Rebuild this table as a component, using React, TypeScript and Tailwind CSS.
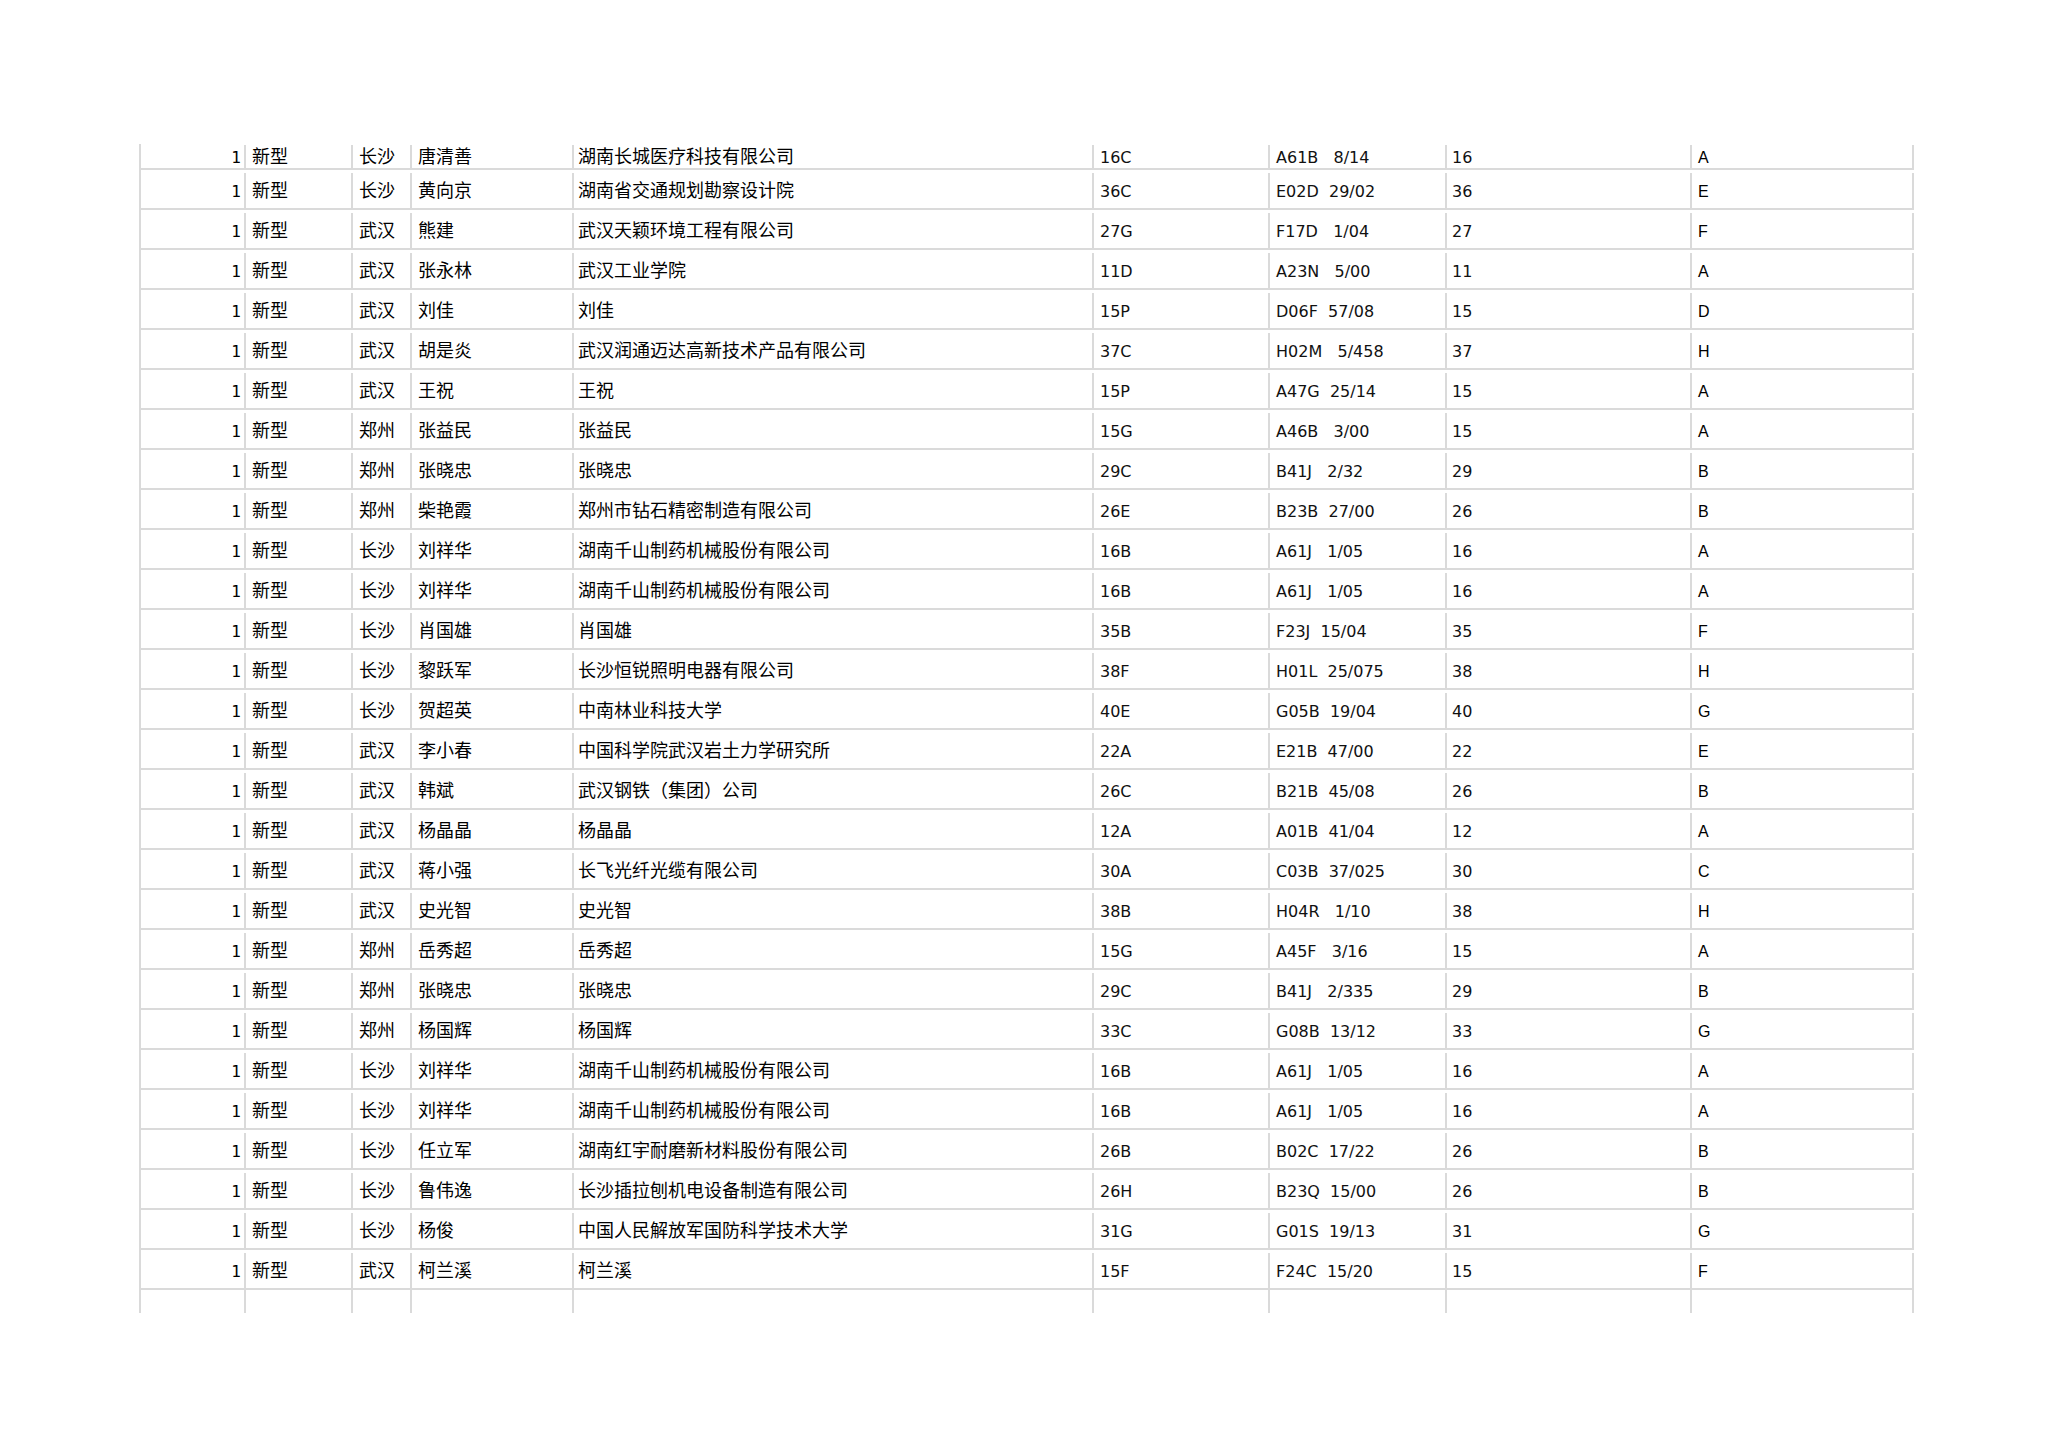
import React from 'react';

type Row = [string, string, string, string, string, string, string, string];

const rows: Row[] = [
  ['新型', '长沙', '唐清善', '湖南长城医疗科技有限公司', '16C', 'A61B   8/14', '16', 'A'],
  ['新型', '长沙', '黄向京', '湖南省交通规划勘察设计院', '36C', 'E02D  29/02', '36', 'E'],
  ['新型', '武汉', '熊建', '武汉天颖环境工程有限公司', '27G', 'F17D   1/04', '27', 'F'],
  ['新型', '武汉', '张永林', '武汉工业学院', '11D', 'A23N   5/00', '11', 'A'],
  ['新型', '武汉', '刘佳', '刘佳', '15P', 'D06F  57/08', '15', 'D'],
  ['新型', '武汉', '胡是炎', '武汉润通迈达高新技术产品有限公司', '37C', 'H02M   5/458', '37', 'H'],
  ['新型', '武汉', '王祝', '王祝', '15P', 'A47G  25/14', '15', 'A'],
  ['新型', '郑州', '张益民', '张益民', '15G', 'A46B   3/00', '15', 'A'],
  ['新型', '郑州', '张晓忠', '张晓忠', '29C', 'B41J   2/32', '29', 'B'],
  ['新型', '郑州', '柴艳霞', '郑州市钻石精密制造有限公司', '26E', 'B23B  27/00', '26', 'B'],
  ['新型', '长沙', '刘祥华', '湖南千山制药机械股份有限公司', '16B', 'A61J   1/05', '16', 'A'],
  ['新型', '长沙', '刘祥华', '湖南千山制药机械股份有限公司', '16B', 'A61J   1/05', '16', 'A'],
  ['新型', '长沙', '肖国雄', '肖国雄', '35B', 'F23J  15/04', '35', 'F'],
  ['新型', '长沙', '黎跃军', '长沙恒锐照明电器有限公司', '38F', 'H01L  25/075', '38', 'H'],
  ['新型', '长沙', '贺超英', '中南林业科技大学', '40E', 'G05B  19/04', '40', 'G'],
  ['新型', '武汉', '李小春', '中国科学院武汉岩土力学研究所', '22A', 'E21B  47/00', '22', 'E'],
  ['新型', '武汉', '韩斌', '武汉钢铁（集团）公司', '26C', 'B21B  45/08', '26', 'B'],
  ['新型', '武汉', '杨晶晶', '杨晶晶', '12A', 'A01B  41/04', '12', 'A'],
  ['新型', '武汉', '蒋小强', '长飞光纤光缆有限公司', '30A', 'C03B  37/025', '30', 'C'],
  ['新型', '武汉', '史光智', '史光智', '38B', 'H04R   1/10', '38', 'H'],
  ['新型', '郑州', '岳秀超', '岳秀超', '15G', 'A45F   3/16', '15', 'A'],
  ['新型', '郑州', '张晓忠', '张晓忠', '29C', 'B41J   2/335', '29', 'B'],
  ['新型', '郑州', '杨国辉', '杨国辉', '33C', 'G08B  13/12', '33', 'G'],
  ['新型', '长沙', '刘祥华', '湖南千山制药机械股份有限公司', '16B', 'A61J   1/05', '16', 'A'],
  ['新型', '长沙', '刘祥华', '湖南千山制药机械股份有限公司', '16B', 'A61J   1/05', '16', 'A'],
  ['新型', '长沙', '任立军', '湖南红宇耐磨新材料股份有限公司', '26B', 'B02C  17/22', '26', 'B'],
  ['新型', '长沙', '鲁伟逸', '长沙插拉刨机电设备制造有限公司', '26H', 'B23Q  15/00', '26', 'B'],
  ['新型', '长沙', '杨俊', '中国人民解放军国防科学技术大学', '31G', 'G01S  19/13', '31', 'G'],
  ['新型', '武汉', '柯兰溪', '柯兰溪', '15F', 'F24C  15/20', '15', 'F']
];

const cell = 'flex shrink-0 items-center border-r-2 border-[#dadada] whitespace-pre';
// CJK glyphs sit low in Noto, nudge them up a bit
const cjk = "font-['Noto_Sans_CJK_SC',sans-serif] text-[18px] leading-none text-black pl-[6px] pb-[4px]";
const latin = "font-['DejaVu_Sans',sans-serif] text-[16px] leading-none text-[#111] pl-[6px] pt-[2px]";

function TableRow({ row, first, empty }: { row?: Row; first?: boolean; empty?: boolean }) {
  const height = empty ? 'h-[23px]' : first ? 'h-[26px] border-b-2 pt-[1px]' : 'h-[40px] border-b-2 pt-[3px]';
  const c = row ?? ['', '', '', '', '', '', '', ''];
  return (
    <div className={`flex w-max border-l-2 border-[#dadada] ${height}`}>
      <div
        className={`${cell} w-[105px] justify-end pr-[3px] pt-[2px] font-['DejaVu_Sans_Mono',monospace] text-[16px] leading-none text-black`}
      >
        {row ? '1' : ''}
      </div>
      <div className={`${cell} ${cjk} w-[107px]`}>{c[0]}</div>
      <div className={`${cell} ${cjk} w-[59px]`}>{c[1]}</div>
      <div className={`${cell} ${cjk} w-[162px]`}>{c[2]}</div>
      <div className={`${cell} ${cjk} w-[520px] !pl-[4px]`}>{c[3]}</div>
      <div className={`${cell} ${latin} w-[176px]`}>{c[4]}</div>
      <div className={`${cell} ${latin} w-[177px]`}>{c[5]}</div>
      <div className={`${cell} ${latin} w-[245px] !pl-[5px]`}>{c[6]}</div>
      <div
        className={`${cell} w-[222px] pl-[6px] pt-[2px] font-['Liberation_Sans',sans-serif] text-[16px] leading-none text-black`}
      >
        {c[7]}
      </div>
    </div>
  );
}

export default function App() {
  return (
    <div className="h-[1447px] w-[2048px] bg-white">
      <div className="ml-[139px] pt-[144px]">
        {rows.map((row, i) => (
          <TableRow key={i} row={row} first={i === 0} />
        ))}
        <TableRow empty />
      </div>
    </div>
  );
}
